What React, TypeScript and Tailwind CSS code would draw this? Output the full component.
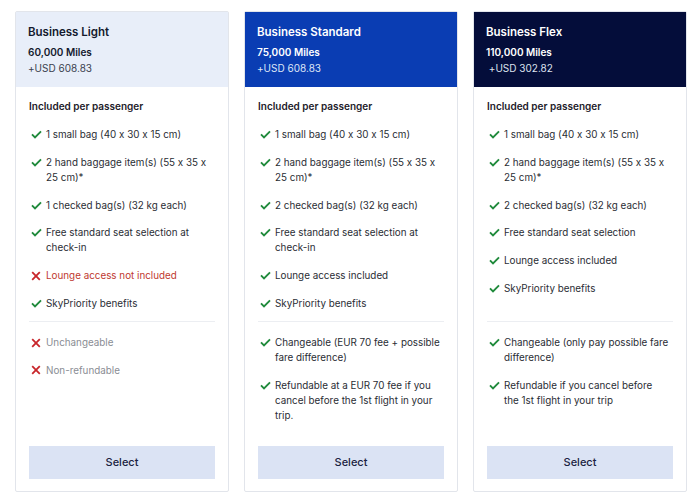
import React from "react";

type Item = { text: string; ok: boolean; tone?: "red" | "muted" };

interface Fare {
  name: string;
  miles: string;
  price: string;
  headerClass: string;
  titleClass: string;
  priceClass: string;
  top: Item[];
  bottom: Item[];
}

const fares: Fare[] = [
  {
    name: "Business Light",
    miles: "60,000 Miles",
    price: "+USD 608.83",
    headerClass: "bg-[#e8eef9]",
    titleClass: "text-[#141a2e]",
    priceClass: "text-[#3a3f4d]",
    top: [
      { text: "1 small bag (40 x 30 x 15 cm)", ok: true },
      { text: "2 hand baggage item(s) (55 x 35 x 25 cm)*", ok: true },
      { text: "1 checked bag(s) (32 kg each)", ok: true },
      { text: "Free standard seat selection at check-in", ok: true },
      { text: "Lounge access not included", ok: false, tone: "red" },
      { text: "SkyPriority benefits", ok: true },
    ],
    bottom: [
      { text: "Unchangeable", ok: false, tone: "muted" },
      { text: "Non-refundable", ok: false, tone: "muted" },
    ],
  },
  {
    name: "Business Standard",
    miles: "75,000 Miles",
    price: "+USD 608.83",
    headerClass: "bg-[#0a3db3]",
    titleClass: "text-white",
    priceClass: "text-[#dfe6f7]",
    top: [
      { text: "1 small bag (40 x 30 x 15 cm)", ok: true },
      { text: "2 hand baggage item(s) (55 x 35 x 25 cm)*", ok: true },
      { text: "2 checked bag(s) (32 kg each)", ok: true },
      { text: "Free standard seat selection at check-in", ok: true },
      { text: "Lounge access included", ok: true },
      { text: "SkyPriority benefits", ok: true },
    ],
    bottom: [
      { text: "Changeable (EUR 70 fee + possible fare difference)", ok: true },
      {
        text: "Refundable at a EUR 70 fee if you cancel before the 1st flight in your trip.",
        ok: true,
      },
    ],
  },
  {
    name: "Business Flex",
    miles: "110,000 Miles",
    price: "\u00a0+USD 302.82",
    headerClass: "bg-[#040d3a]",
    titleClass: "text-white",
    priceClass: "text-[#dde2ef]",
    top: [
      { text: "1 small bag (40 x 30 x 15 cm)", ok: true },
      { text: "2 hand baggage item(s) (55 x 35 x 25 cm)*", ok: true },
      { text: "2 checked bag(s) (32 kg each)", ok: true },
      { text: "Free standard seat selection", ok: true },
      { text: "Lounge access included", ok: true },
      { text: "SkyPriority benefits", ok: true },
    ],
    bottom: [
      { text: "Changeable (only pay possible fare difference)", ok: true },
      { text: "Refundable if you cancel before the\u00a01st flight in your trip", ok: true },
    ],
  },
];

function Check() {
  return (
    <svg width="11" height="9" viewBox="0 0 11 9" fill="none">
      <path d="M1 4.4 L4 7.4 L10 1.3" stroke="#1f8a3b" strokeWidth="1.9" />
    </svg>
  );
}

function Cross() {
  return (
    <svg width="10" height="10" viewBox="0 0 10 10" fill="none">
      <path d="M1.2 1.2 L8.8 8.8 M8.8 1.2 L1.2 8.8" stroke="#c8262b" strokeWidth="1.8" />
    </svg>
  );
}

function Row({ item }: { item: Item }) {
  const color =
    item.tone === "red"
      ? "text-[#c0392f]"
      : item.tone === "muted"
        ? "text-[#8a8d94]"
        : "text-[#2a2d34]";
  return (
    <li className="flex items-start">
      <span className="w-[17px] h-[15px] flex items-center flex-shrink-0 pl-[2px]">
        {item.ok ? <Check /> : <Cross />}
      </span>
      <span className={`text-[9.85px] leading-[15px] ${color}`}>{item.text}</span>
    </li>
  );
}

function FareCard({ fare }: { fare: Fare }) {
  return (
    <div className="w-[214px] h-[481px] border border-[#e2e5eb] rounded-[2px] flex flex-col bg-white">
      <div className={`h-[75px] px-[12px] pt-[12px] ${fare.headerClass}`}>
        <div className={`text-[11.5px] leading-[16px] font-semibold ${fare.titleClass}`}>
          {fare.name}
        </div>
        <div className={`mt-[5px] text-[10px] leading-[14px] font-semibold ${fare.titleClass}`}>
          {fare.miles}
        </div>
        <div className={`mt-[2px] text-[10px] leading-[14px] ${fare.priceClass}`}>{fare.price}</div>
      </div>
      <div className="flex-1 flex flex-col px-[13px] pb-[12px]">
        <div className="mt-[12px] text-[10px] leading-[14px] font-semibold text-[#1d2029]">
          Included per passenger
        </div>
        <ul className="mt-[14px] h-[184px] flex flex-col gap-[12.8px]">
          {fare.top.map((it) => (
            <Row key={it.text} item={it} />
          ))}
        </ul>
        <div className="mt-[10px] h-px bg-[#eceef2]" />
        <ul className="mt-[13px] flex flex-col gap-[12.8px]">
          {fare.bottom.map((it) => (
            <Row key={it.text} item={it} />
          ))}
        </ul>
        <button className="mt-auto h-[33px] w-full bg-[#dbe3f4] text-[11px] font-medium text-[#1b2342]">
          Select
        </button>
      </div>
    </div>
  );
}

export default function App() {
  return (
    <div
      className="w-[700px] h-[498px] bg-white flex gap-[15px] pl-[15px] pt-[11px] [font-feature-settings:'calt'_0]"
      style={{ fontFamily: "Inter, 'Noto Sans', sans-serif" }}
    >
      {fares.map((f) => (
        <FareCard key={f.name} fare={f} />
      ))}
    </div>
  );
}
